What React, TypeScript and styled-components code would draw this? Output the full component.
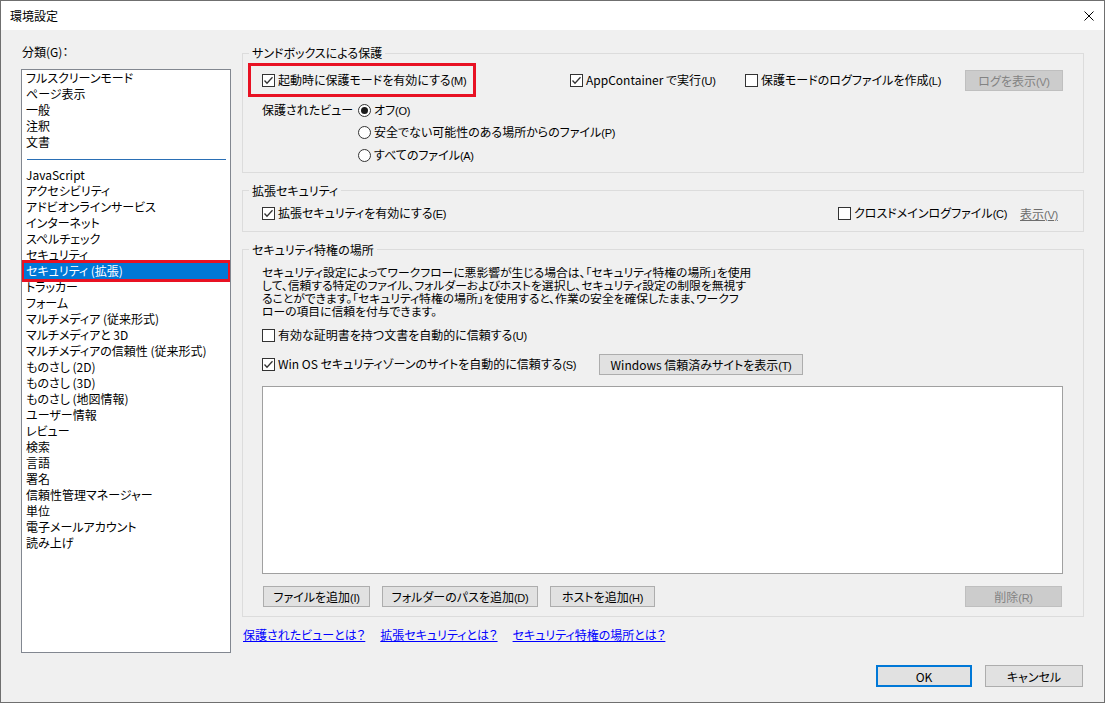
import React from 'react';
import { createGlobalStyle, styled } from 'styled-components';

let GlobalStyle = createGlobalStyle`
  html, body {
    margin: 0;
    padding: 0;
    background: #f0f0f0;
  }
  body {
    font-family: "Noto Sans CJK JP", "Noto Sans", "Liberation Sans", sans-serif;
    font-size: 12px;
    color: #000;
    font-feature-settings: "palt" 1;
  }
  * {
    box-sizing: border-box;
  }
`;

let Page = styled('div')`
  width: 1105px;
  height: 703px;
  border: 1px solid #6f6f6f;
  display: flex;
  flex-direction: column;
  background: #f0f0f0;
  overflow: hidden;
`;

let TitleBar = styled('header')`
  height: 29px;
  flex: none;
  background: #fff;
  display: flex;
  align-items: center;
  justify-content: space-between;
  padding: 0 10px 0 9px;
`;

let Title = styled('h1')`
  margin: 0;
  font-size: 12px;
  font-weight: 400;
`;

let CloseButton = styled('span')`
  display: flex;
  width: 10px;
  height: 10px;
`;

let Body = styled('div')`
  flex: 1;
  display: flex;
  flex-direction: column;
  padding: 0 20px;
`;

let Main = styled('div')`
  height: 623px;
  display: flex;
  gap: 11px;
`;

let LeftCol = styled('div')`
  width: 210px;
  flex: none;
  display: flex;
  flex-direction: column;
  padding-top: 14px;
`;

let FieldLabel = styled('span')`
  line-height: 16px;
  padding-left: 1px;
`;

let CategoryList = styled('ul')`
  list-style: none;
  margin: 9px 0 0;
  height: 584px;
  border: 1px solid #828790;
  background: #fff;
  padding: 0 2px;
  overflow: hidden;
`;

let CategoryItem = styled('li')<{ $selected?: boolean }>`
  line-height: 16px;
  height: 16px;
  padding-left: 2px;
  white-space: nowrap;
  background: ${p => (p.$selected ? '#0078d7' : 'transparent')};
  color: ${p => (p.$selected ? '#fff' : '#000')};
  outline: ${p => (p.$selected ? '3px solid #e81123' : 'none')};
`;

let Separator = styled('li')`
  height: 1px;
  margin: 9px 2px 7px 3px;
  background: #2a6fb5;
`;

let RightCol = styled('div')`
  flex: 1;
  display: flex;
  flex-direction: column;
  padding-top: 15px;
`;

let Group = styled('fieldset')`
  margin: 0;
  padding: 0;
  min-width: 0;
  border: 1px solid #dcdcdc;

  & + & {
    margin-top: 10px;
  }
`;

let Legend = styled('legend')`
  margin-left: 6px;
  padding: 0 3px;
  line-height: 16px;
  font-size: 12px;
`;

let GroupBody = styled('div')<{ $pad: string }>`
  padding: ${p => p.$pad};
  display: flex;
  flex-direction: column;
`;

let Row = styled('div')<{ $h: number; $mt?: number; $pl?: number }>`
  display: flex;
  align-items: center;
  height: ${p => p.$h}px;
  margin-top: ${p => p.$mt ?? 0}px;
  padding-left: ${p => p.$pl ?? 0}px;
  white-space: nowrap;
`;

let Cell = styled('div')<{ $w?: number; $ml?: number }>`
  display: flex;
  align-items: center;
  flex: none;
  width: ${p => (p.$w ? `${p.$w}px` : 'auto')};
  margin-left: ${p => p.$ml ?? 0}px;
`;

let Highlight = styled('div')`
  margin-left: 5px;
  width: 228px;
  height: 34px;
  border: 3px solid #e81123;
  padding-left: 11px;
  display: flex;
  align-items: center;
  flex: none;
`;

let CheckLabel = styled('label')`
  display: flex;
  align-items: center;
  gap: 3px;
  white-space: nowrap;
  line-height: 16px;
`;

let Box = styled('span')`
  width: 13px;
  height: 13px;
  border: 1px solid #333;
  background: #fff;
  display: flex;
  flex: none;
`;

let Circle = styled('span')`
  width: 13px;
  height: 13px;
  border: 1px solid #333;
  border-radius: 50%;
  background: #fff;
  display: flex;
  align-items: center;
  justify-content: center;
  flex: none;
`;

let Dot = styled('span')`
  width: 7px;
  height: 7px;
  border-radius: 50%;
  background: #1a1a1a;
`;

// the "(M)" access key is drawn a little smaller and narrower than the label
let Key = styled('span')`
  font-family: "Liberation Sans", "Noto Sans", sans-serif;
  font-size: 11px;
  letter-spacing: -0.3px;
`;

let Text = ({ children }: { children: string }) => {
  let m = children.match(/^(.*)(\([A-Z]\))$/);
  if (!m) return <span>{children}</span>;
  return (
    <span>
      {m[1]}
      <Key>{m[2]}</Key>
    </span>
  );
};

let Checkbox = ({ checked, children }: { checked?: boolean; children: string }) => (
  <CheckLabel>
    <Box>
      {checked && (
        <svg width="11" height="11" viewBox="0 0 11 11">
          <polyline points="1.5,5.5 4,8.2 9.5,2.2" fill="none" stroke="#333" strokeWidth="1.3" />
        </svg>
      )}
    </Box>
    <Text>{children}</Text>
  </CheckLabel>
);

let Radio = ({ checked, children }: { checked?: boolean; children: string }) => (
  <CheckLabel>
    <Circle>{checked && <Dot />}</Circle>
    <Text>{children}</Text>
  </CheckLabel>
);

let ViewRow = styled('div')`
  display: flex;
  margin-top: 2px;
  padding-left: 19px;
`;

let ViewLabel = styled('span')`
  width: 96px;
  line-height: 22.5px;
`;

let RadioList = styled('div')`
  display: flex;
  flex-direction: column;

  & > label {
    height: 22.5px;
  }
`;

let Button = styled('button')<{ $w: number; $h?: number; $primary?: boolean }>`
  width: ${p => p.$w}px;
  height: ${p => p.$h ?? 21}px;
  flex: none;
  padding: 0;
  font-family: inherit;
  font-size: 12px;
  font-feature-settings: "palt" 1;
  color: #000;
  background: #e1e1e1;
  border: 1px solid ${p => (p.$primary ? '#0078d7' : '#adadad')};
  box-shadow: ${p => (p.$primary ? 'inset 0 0 0 1px #0078d7' : 'none')};
  display: flex;
  align-items: center;
  justify-content: center;
  white-space: nowrap;

  &:disabled {
    background: #cccccc;
    border-color: #bfbfbf;
    color: #838383;
  }
`;

let DisabledLink = styled('span')`
  color: #6d6d6d;
  text-decoration: underline;
`;

let Para = styled('p')`
  margin: 0;
  font-size: 11.8px;
  line-height: 13px;
  white-space: nowrap;
`;

let PathList = styled('div')`
  margin-top: 10px;
  height: 188px;
  background: #fff;
  border: 1px solid #a0a0a0;
`;

let ButtonRow = styled('div')`
  margin-top: 12px;
  display: flex;
  gap: 12px;
  padding-left: 1px;

  & > :last-child {
    margin-left: auto;
    margin-right: 1px;
  }
`;

let Links = styled('nav')`
  margin-top: 10px;
  display: flex;
  gap: 15px;
  padding-left: 1px;
  line-height: 16px;
`;

let HelpLink = styled('a')`
  color: #0000ff;
  text-decoration: underline;
  cursor: pointer;
`;

let Footer = styled('div')`
  margin-top: 12px;
  display: flex;
  justify-content: flex-end;
  gap: 13px;
  padding-right: 1px;
`;

let categories = [
  'JavaScript',
  'アクセシビリティ',
  'アドビオンラインサービス',
  'インターネット',
  'スペルチェック',
  'セキュリティ',
  'セキュリティ (拡張)',
  'トラッカー',
  'フォーム',
  'マルチメディア (従来形式)',
  'マルチメディアと 3D',
  'マルチメディアの信頼性 (従来形式)',
  'ものさし (2D)',
  'ものさし (3D)',
  'ものさし (地図情報)',
  'ユーザー情報',
  'レビュー',
  '検索',
  '言語',
  '署名',
  '信頼性管理マネージャー',
  '単位',
  '電子メールアカウント',
  '読み上げ'
];

let pinned = ['フルスクリーンモード', 'ページ表示', '一般', '注釈', '文書'];

export default function App() {
  let selected = 'セキュリティ (拡張)';

  return (
    <>
      <GlobalStyle />
      <Page>
        <TitleBar>
          <Title>環境設定</Title>
          <CloseButton>
            <svg width="10" height="10" viewBox="0 0 10 10">
              <path d="M0.5 0.5 L9.5 9.5 M9.5 0.5 L0.5 9.5" stroke="#000" strokeWidth="1" />
            </svg>
          </CloseButton>
        </TitleBar>

        <Body>
          <Main>
            <LeftCol>
              <FieldLabel>分類(G)：</FieldLabel>
              <CategoryList>
                {pinned.map(c => (
                  <CategoryItem key={c}>{c}</CategoryItem>
                ))}
                <Separator />
                {categories.map(c => (
                  <CategoryItem key={c} $selected={c == selected}>
                    {c}
                  </CategoryItem>
                ))}
              </CategoryList>
            </LeftCol>

            <RightCol>
              <Group>
                <Legend>サンドボックスによる保護</Legend>
                <GroupBody $pad="0 0 5px">
                  <Row $h={34} $mt={2}>
                    <Highlight>
                      <Checkbox checked>起動時に保護モードを有効にする(M)</Checkbox>
                    </Highlight>
                    <Cell $ml={94} $w={175}>
                      <Checkbox checked>AppContainer で実行(U)</Checkbox>
                    </Cell>
                    <Cell $w={220}>
                      <Checkbox>保護モードのログファイルを作成(L)</Checkbox>
                    </Cell>
                    <Button $w={98} disabled>
                      <Text>ログを表示(V)</Text>
                    </Button>
                  </Row>
                  <ViewRow>
                    <ViewLabel>保護されたビュー</ViewLabel>
                    <RadioList>
                      <Radio checked>オフ(O)</Radio>
                      <Radio>安全でない可能性のある場所からのファイル(P)</Radio>
                      <Radio>すべてのファイル(A)</Radio>
                    </RadioList>
                  </ViewRow>
                </GroupBody>
              </Group>

              <Group>
                <Legend>拡張セキュリティ</Legend>
                <GroupBody $pad="3px 0 5px">
                  <Row $h={24} $pl={19}>
                    <Cell $w={576}>
                      <Checkbox checked>拡張セキュリティを有効にする(E)</Checkbox>
                    </Cell>
                    <Cell $w={182}>
                      <Checkbox>クロスドメインログファイル(C)</Checkbox>
                    </Cell>
                    <DisabledLink>
                      <Text>表示(V)</Text>
                    </DisabledLink>
                  </Row>
                </GroupBody>
              </Group>

              <Group>
                <Legend>セキュリティ特権の場所</Legend>
                <GroupBody $pad="7px 20px 9px 19px">
                  <Para>
                    セキュリティ設定によってワークフローに悪影響が生じる場合は、「セキュリティ特権の場所」を使用
                    <br />
                    して、信頼する特定のファイル、フォルダーおよびホストを選択し、セキュリティ設定の制限を無視す
                    <br />
                    ることができます。「セキュリティ特権の場所」を使用すると、作業の安全を確保したまま、ワークフ
                    <br />
                    ローの項目に信頼を付与できます。
                  </Para>
                  <Row $h={24} $mt={6.5}>
                    <Checkbox>有効な証明書を持つ文書を自動的に信頼する(U)</Checkbox>
                  </Row>
                  <Row $h={23} $mt={6}>
                    <Cell $w={337}>
                      <Checkbox checked>Win OS セキュリティゾーンのサイトを自動的に信頼する(S)</Checkbox>
                    </Cell>
                    <Button $w={204}>
                      <Text>Windows 信頼済みサイトを表示(T)</Text>
                    </Button>
                  </Row>
                  <PathList />
                  <ButtonRow>
                    <Button $w={107}>
                      <Text>ファイルを追加(I)</Text>
                    </Button>
                    <Button $w={156}>
                      <Text>フォルダーのパスを追加(D)</Text>
                    </Button>
                    <Button $w={105}>
                      <Text>ホストを追加(H)</Text>
                    </Button>
                    <Button $w={97} disabled>
                      <Text>削除(R)</Text>
                    </Button>
                  </ButtonRow>
                </GroupBody>
              </Group>

              <Links>
                <HelpLink>保護されたビューとは？</HelpLink>
                <HelpLink>拡張セキュリティとは？</HelpLink>
                <HelpLink>セキュリティ特権の場所とは？</HelpLink>
              </Links>
            </RightCol>
          </Main>

          <Footer>
            <Button $w={96} $h={22} $primary>
              OK
            </Button>
            <Button $w={98} $h={22}>
              キャンセル
            </Button>
          </Footer>
        </Body>
      </Page>
    </>
  );
}
